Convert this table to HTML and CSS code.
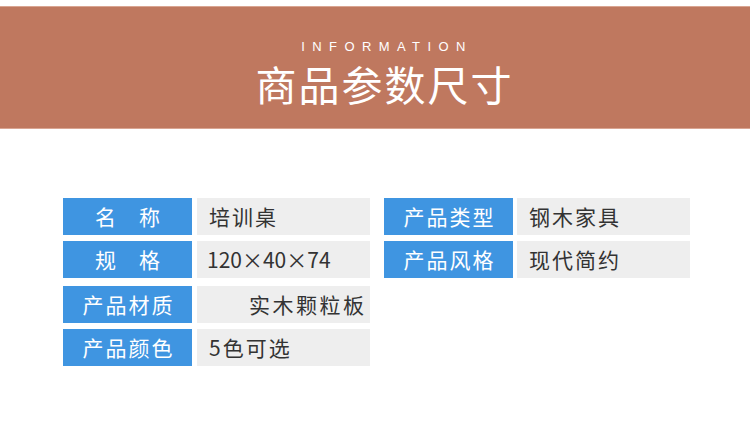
FILE: index.html
```html
<!DOCTYPE html>
<html lang="zh-CN">
<head>
<meta charset="utf-8">
<title>商品参数尺寸</title>
<link rel="stylesheet" href="styles.css">
</head>
<body>
<header class="banner">
  <div class="banner-en">INFORMATION</div>
  <h1 class="banner-title">商品参数尺寸</h1>
</header>
<main class="params">
  <div class="col">
    <div class="row"><div class="label label-wide">名称</div><div class="value">培训桌</div></div>
    <div class="row"><div class="label label-wide">规格</div><div class="value value-num">120×40×74</div></div>
    <div class="row row-gap"><div class="label">产品材质</div><div class="value value-indent">实木颗粒板</div></div>
    <div class="row"><div class="label">产品颜色</div><div class="value">5色可选</div></div>
  </div>
  <div class="col col-right">
    <div class="row"><div class="label">产品类型</div><div class="value">钢木家具</div></div>
    <div class="row"><div class="label">产品风格</div><div class="value">现代简约</div></div>
  </div>
</main>
</body>
</html>
```
FILE: styles.css
```css
html, body {
  margin: 0;
  padding: 0;
  background: #ffffff;
}
body {
  width: 750px;
  height: 432px;
  overflow: hidden;
  font-family: "Noto Sans CJK SC", "Noto Sans", sans-serif;
}
.banner {
  margin-top: 6px;
  height: 123px;
  background: #bf785f;
  border-top: 1px solid #d9a592;
  border-bottom: 1px solid #d9a592;
  box-sizing: border-box;
  display: flex;
  flex-direction: column;
  align-items: center;
  padding-left: 17px;
  color: #ffffff;
}
.banner-en {
  margin-top: 33px;
  font-family: "Liberation Sans", Arial, sans-serif;
  font-size: 13px;
  line-height: 14px;
  letter-spacing: 7.4px;
  padding-left: 7px;
}
.banner-title {
  margin: 8px 0 0 0;
  font-weight: normal;
  font-size: 41px;
  line-height: 42px;
  letter-spacing: 2px;
  padding-left: 2px;
}
.params {
  display: flex;
  gap: 14px;
  padding: 69px 0 0 63px;
}
.col {
  display: flex;
  flex-direction: column;
  gap: 6px;
}
.row {
  display: flex;
  height: 37px;
  gap: 5px;
}
.col-right .row {
  gap: 4px;
}
.row-gap {
  margin-top: 2px;
}
.label {
  width: 129px;
  background: #3f95e1;
  color: #ffffff;
  font-size: 21px;
  line-height: 37px;
  letter-spacing: 2px;
  text-align: center;
  padding-left: 2px;
  box-sizing: border-box;
}
.label-wide {
  letter-spacing: 23px;
  padding-left: 23px;
}
.value {
  width: 173px;
  background: #eeeeee;
  color: #333333;
  font-size: 21px;
  line-height: 37px;
  letter-spacing: 2px;
  padding-left: 12px;
  box-sizing: border-box;
}
.value-num {
  letter-spacing: 0;
  padding-left: 10px;
}
.value-indent {
  padding-left: 52px;
  letter-spacing: 2.5px;
}
```
